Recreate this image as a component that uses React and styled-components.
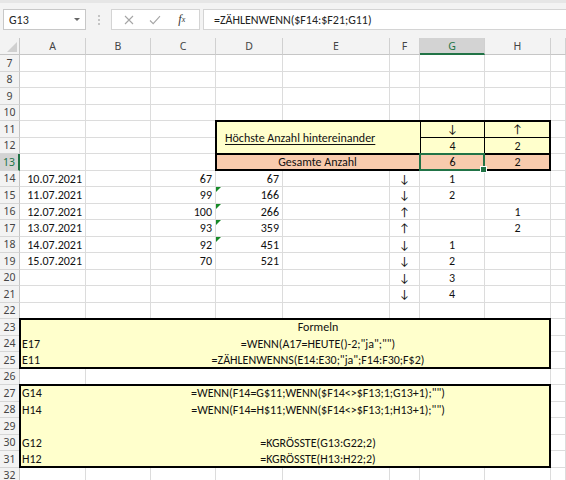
import React from 'react';
import styled, { createGlobalStyle } from 'styled-components';

const GlobalStyle = createGlobalStyle`
  html, body { margin: 0; padding: 0; background: #fff; overflow: hidden; }
  body { font-family: Carlito, Lato, "Liberation Sans", sans-serif; }
  #root { width: 566px; height: 480px; }
`;

const CELL_FONT = 'Carlito, Lato, "Liberation Sans", sans-serif';
const UI_FONT = '"Noto Sans", "Open Sans", sans-serif';

const Page = styled.div`
  width: 566px;
  height: 480px;
  overflow: hidden;
  display: flex;
  flex-direction: column;
  background: #fff;
`;

const FormulaBar = styled.div`
  flex: 0 0 38px;
  box-sizing: border-box;
  background: #f3f3f3;
  border-top: 3px solid #e6e6e6;
  display: flex;
  align-items: flex-start;
  padding: 6px 0 0 3px;
`;

const NameBox = styled.div`
  width: 83px;
  height: 21px;
  box-sizing: border-box;
  background: #fff;
  border: 1px solid #c8c8c8;
  display: flex;
  align-items: center;
  justify-content: space-between;
  padding: 0 5px 0 5px;
  font-family: ${CELL_FONT};
  font-size: 12px;
  color: #222;
`;

const DropArrow = styled.span`
  width: 0;
  height: 0;
  border-left: 3px solid transparent;
  border-right: 3px solid transparent;
  border-top: 3px solid #666;
`;

const Grip = styled.div`
  width: 25px;
  height: 21px;
  display: flex;
  align-items: center;
  justify-content: center;
`;

const IconBox = styled.div`
  width: 89px;
  height: 21px;
  box-sizing: border-box;
  background: #fff;
  border: 1px solid #d4d4d4;
  display: flex;
  align-items: center;
  justify-content: space-around;
  padding: 0 4px;
`;

const IconSlot = styled.span`
  width: 16px;
  display: flex;
  align-items: center;
  justify-content: center;
  font-family: "Liberation Serif", serif;
  font-style: italic;
  font-size: 12px;
  color: #333;
`;

const FormulaInput = styled.div`
  flex: 1;
  height: 21px;
  margin-left: 3px;
  margin-right: -2px;
  box-sizing: border-box;
  background: #fff;
  border: 1px solid #d4d4d4;
  display: flex;
  align-items: center;
  padding-left: 10px;
  font-family: ${CELL_FONT};
  font-size: 12px;
  color: #222;
`;

const Sheet = styled.div`
  display: grid;
  grid-template-columns: 20px 66px 65px 65px 67px 107px 30px 65px 66px 1fr;
  grid-template-rows: 17px repeat(26, 16.5px);
  font-family: ${CELL_FONT};
`;

const Corner = styled.div`
  grid-column: 1;
  grid-row: 1;
  box-sizing: border-box;
  background: #f3f3f3;
  border-right: 1px solid #c6c6c6;
  border-bottom: 1px solid #c6c6c6;
  display: flex;
  align-items: flex-end;
  justify-content: flex-end;
  padding: 0 2px 2px 0;
`;

const CornerTri = styled.span`
  width: 0;
  height: 0;
  border-left: 10px solid transparent;
  border-bottom: 10px solid #d0d0d0;
`;

const ColHead = styled.div`
  grid-column: ${p => p.$c};
  grid-row: 1;
  box-sizing: border-box;
  background: ${p => (p.$sel ? '#d3d3d3' : '#f3f3f3')};
  color: ${p => (p.$sel ? '#217346' : '#444')};
  border-right: 1px solid #d0d0d0;
  border-bottom: ${p => (p.$sel ? '2px solid #217346' : '1px solid #c6c6c6')};
  display: flex;
  align-items: center;
  justify-content: center;
  font-family: ${UI_FONT};
  font-size: 10.5px;
  padding-top: ${p => (p.$sel ? '1px' : '0')};
`;

const RowHead = styled.div`
  grid-column: 1;
  grid-row: ${p => p.$r};
  box-sizing: border-box;
  background: ${p => (p.$sel ? '#d3d3d3' : '#f3f3f3')};
  color: ${p => (p.$sel ? '#217346' : '#444')};
  border-right: ${p => (p.$sel ? '2px solid #217346' : '1px solid #c6c6c6')};
  border-bottom: 1px solid #d6d6d6;
  display: flex;
  align-items: center;
  justify-content: center;
  font-family: ${UI_FONT};
  font-size: 10.5px;
`;

const FILL = { yellow: '#ffffcc', salmon: '#f8cbad' };
const JUSTIFY = { left: 'flex-start', right: 'flex-end', center: 'center' };

const Cell = styled.div`
  grid-column: ${p => p.$c} / span ${p => p.$span || 1};
  grid-row: ${p => p.$r} / span ${p => p.$rspan || 1};
  box-sizing: border-box;
  position: relative;
  min-width: 0;
  white-space: nowrap;
  display: flex;
  align-items: center;
  justify-content: ${p => JUSTIFY[p.$align || 'left']};
  padding: 1px 3px 0 ${p => p.$pl || 3}px;
  font-size: 12px;
  line-height: 14px;
  color: #111;
  background: ${p => FILL[p.$fill] || '#fff'};
  border-right: 1px solid ${p => (p.$fill ? (p.$br ? '#000' : 'transparent') : '#dcdcdc')};
  border-bottom: 1px solid ${p => (p.$fill ? (p.$bb ? '#000' : 'transparent') : '#dcdcdc')};
  border-left: ${p => (p.$bl ? '1px solid #000' : 'none')};
  text-decoration: ${p => (p.$u ? 'underline' : 'none')};
  text-underline-offset: 2px;

  &::before {
    content: '';
    display: ${p => (p.$flag ? 'block' : 'none')};
    position: absolute;
    left: 0;
    top: 0;
    width: 0;
    height: 0;
    border-top: 5px solid #168a28;
    border-right: 5px solid transparent;
  }
`;

const Frame = styled.div`
  grid-column: ${p => p.$c1} / ${p => p.$c2 + 1};
  grid-row: ${p => p.$r1} / ${p => p.$r2 + 1};
  box-sizing: border-box;
  border: 2px solid #000;
  margin: -1px 0 0 -1px;
  pointer-events: none;
  z-index: 1;
`;

const Selection = styled.div`
  grid-column: ${p => p.$c};
  grid-row: ${p => p.$r};
  box-sizing: border-box;
  border: 2px solid #217346;
  margin: -1px 0 0 -1px;
  position: relative;
  pointer-events: none;
  z-index: 2;

  &::after {
    content: '';
    position: absolute;
    right: -4px;
    bottom: -4px;
    width: 5px;
    height: 5px;
    background: #217346;
    border: 1px solid #fff;
  }
`;

const COL = { A: 2, B: 3, C: 4, D: 5, E: 6, F: 7, G: 8, H: 9, I: 10 };
const R = n => n - 5;

const F1 = '=WENN(A17=HEUTE()-2;"ja";"")';
const F2 = '=ZÄHLENWENNS(E14:E30;"ja";F14:F30;F$2)';
const F3 = '=WENN(F14=G$11;WENN($F14<>$F13;1;G13+1);"")';
const F4 = '=WENN(F14=H$11;WENN($F14<>$F13;1;H13+1);"")';

const items = [];
const add = (col, row, props) => items.push({ c: COL[col], r: row, ...props });

// summary block
add('D', 11, { span: 3, rspan: 2, fill: 'yellow', text: 'Höchste Anzahl hintereinander', u: true, pl: 9 });
add('G', 11, { fill: 'yellow', text: '↓', align: 'center', bl: true, br: true, bb: true });
add('H', 11, { fill: 'yellow', text: '↑', align: 'center', bb: true });
add('G', 12, { fill: 'yellow', text: '4', align: 'center', bl: true, br: true });
add('H', 12, { fill: 'yellow', text: '2', align: 'center' });
add('D', 13, { span: 3, fill: 'salmon', text: 'Gesamte Anzahl', align: 'center' });
add('G', 13, { fill: 'salmon', text: '6', align: 'center', bl: true, br: true });
add('H', 13, { fill: 'salmon', text: '2', align: 'center' });

// data rows
const data = [
  ['10.07.2021', '67', '67', false],
  ['11.07.2021', '99', '166', true],
  ['12.07.2021', '100', '266', true],
  ['13.07.2021', '93', '359', true],
  ['14.07.2021', '92', '451', true],
  ['15.07.2021', '70', '521', false],
];
data.forEach(([d, c, s, flag], i) => {
  add('A', 14 + i, { text: d, align: 'right' });
  add('C', 14 + i, { text: c, align: 'right' });
  add('D', 14 + i, { text: s, align: 'right', flag });
});
['↓', '↓', '↑', '↑', '↓', '↓', '↓', '↓'].forEach((a, i) => add('F', 14 + i, { text: a, align: 'center' }));
[[14, '1'], [15, '2'], [18, '1'], [19, '2'], [20, '3'], [21, '4']].forEach(([r, t]) =>
  add('G', r, { text: t, align: 'center' })
);
[[16, '1'], [17, '2']].forEach(([r, t]) => add('H', r, { text: t, align: 'center' }));

// formula notes
const notes = [
  [23, '', 'Formeln'],
  [24, 'E17', F1],
  [25, 'E11', F2],
  [27, 'G14', F3],
  [28, 'H14', F4],
  [29, '', ''],
  [30, 'G12', '=KGRÖSSTE(G13:G22;2)'],
  [31, 'H12', '=KGRÖSSTE(H13:H22;2)'],
];
notes.forEach(([r, a, f]) => {
  add('A', r, { fill: 'yellow', text: a, pl: 2 });
  add('B', r, { span: 7, fill: 'yellow', text: f, align: 'center' });
});
add('B', 26, { span: 7 });

const covered = new Set();
items.forEach(it => {
  for (let dr = 0; dr < (it.rspan || 1); dr++)
    for (let dc = 0; dc < (it.span || 1); dc++) covered.add(`${it.r + dr}:${it.c + dc}`);
});

const rows = [];
for (let r = 7; r <= 32; r++) rows.push(r);
const colKeys = Object.keys(COL);

const frames = [
  ['D', 'H', 11, 13],
  ['D', 'H', 13, 13],
  ['A', 'H', 23, 25],
  ['A', 'H', 27, 31],
];

const XIcon = () => (
  <svg width="10" height="10" viewBox="0 0 10 10">
    <path d="M1 1 L9 9 M9 1 L1 9" stroke="#a6a6a6" strokeWidth="1.1" fill="none" />
  </svg>
);

const CheckIcon = () => (
  <svg width="12" height="10" viewBox="0 0 12 10">
    <path d="M1 5.5 L4.2 8.6 L11 1.2" stroke="#a6a6a6" strokeWidth="1.1" fill="none" />
  </svg>
);

const Dots = () => (
  <svg width="4" height="12" viewBox="0 0 4 12">
    <circle cx="2" cy="2" r="1" fill="#b4b4b4" />
    <circle cx="2" cy="6" r="1" fill="#b4b4b4" />
    <circle cx="2" cy="10" r="1" fill="#b4b4b4" />
  </svg>
);

export default function App() {
  return (
    <Page>
      <GlobalStyle />
      <FormulaBar>
        <NameBox>
          <span>G13</span>
          <DropArrow />
        </NameBox>
        <Grip>
          <Dots />
        </Grip>
        <IconBox>
          <IconSlot><XIcon /></IconSlot>
          <IconSlot><CheckIcon /></IconSlot>
          <IconSlot>f<sub style={{ fontSize: '8px' }}>x</sub></IconSlot>
        </IconBox>
        <FormulaInput>=ZÄHLENWENN($F14:$F21;G11)</FormulaInput>
      </FormulaBar>
      <Sheet>
        <Corner><CornerTri /></Corner>
        {colKeys.map(k => (
          <ColHead key={k} $c={COL[k]} $sel={k === 'G'}>{k === 'I' ? '' : k}</ColHead>
        ))}
        {rows.map(r => (
          <RowHead key={`h${r}`} $r={R(r)} $sel={r === 13}>{r}</RowHead>
        ))}
        {rows.map(r =>
          colKeys
            .filter(k => !covered.has(`${r}:${COL[k]}`))
            .map(k => <Cell key={`${r}${k}`} $r={R(r)} $c={COL[k]} />)
        )}
        {items.map((it, i) => (
          <Cell
            key={`it${i}`}
            $r={R(it.r)}
            $c={it.c}
            $span={it.span}
            $rspan={it.rspan}
            $fill={it.fill}
            $align={it.align}
            $u={it.u}
            $pl={it.pl}
            $bl={it.bl}
            $br={it.br}
            $bb={it.bb}
            $flag={it.flag}
          >
            {it.text}
          </Cell>
        ))}
        {frames.map(([c1, c2, r1, r2], i) => (
          <Frame key={`f${i}`} $c1={COL[c1]} $c2={COL[c2]} $r1={R(r1)} $r2={R(r2)} />
        ))}
        <Selection $c={COL.G} $r={R(13)} />
      </Sheet>
    </Page>
  );
}
